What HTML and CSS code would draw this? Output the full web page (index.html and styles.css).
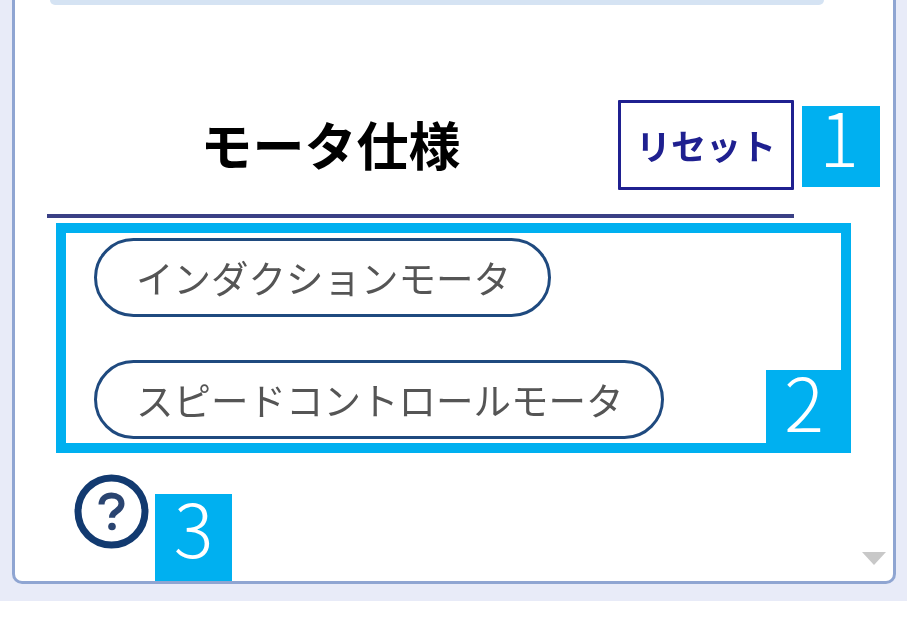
FILE: index.html
```html
<!DOCTYPE html>
<html lang="ja">
<head>
<meta charset="utf-8">
<title>モータ仕様</title>
<link rel="stylesheet" href="styles.css">
</head>
<body>
<div class="stage">
  <section class="panel">
    <div class="top-bar"></div>
    <div class="content">
      <header class="head">
        <h1 class="title">モータ仕様</h1>
        <button class="reset" type="button">リセット</button>
      </header>
      <div class="pills">
        <span class="pill">インダクションモータ</span>
        <span class="pill">スピードコントロールモータ</span>
      </div>
      <svg class="help" viewBox="0 0 75 75" aria-label="ヘルプ">
        <circle cx="37.5" cy="37.5" r="33.500" fill="none" stroke="#123a70" stroke-width="7"/>
        <path d="M27.500 30.500c0-6 4.600-9 10-9s10 3 10 8.300c0 4-2.500 5.800-5 7.500-2.700 1.800-4.500 3-4.500 6.500" fill="none" stroke="#2a4470" stroke-width="6"/>
        <circle cx="38" cy="52.500" r="3.800" fill="#2a4470"/>
      </svg>
    </div>
    <div class="scroll-arrow"></div>
  </section>
  <div class="callout-box"></div>
  <div class="tag tag-1">1</div>
  <div class="tag tag-2">2</div>
  <div class="tag tag-3">3</div>
</div>
</body>
</html>
```
FILE: styles.css
```css
* { box-sizing: border-box; }
html, body { margin: 0; padding: 0; background: #fff; }
body { font-family: "Noto Sans CJK JP", "Noto Sans", sans-serif; }

.stage {
  position: relative;
  height: 601px;
  padding: 0 11px 17px 12px;
  background: #e8ebf8;
}

.panel {
  position: relative;
  height: 584px;
  background: #fff;
  border: 3px solid #8fa5d2;
  border-top: 0;
  border-radius: 0 0 10px 10px;
  filter: blur(0.6px);
}

.top-bar {
  height: 5px;
  margin: 0 69px 0 35px;
  background: #d5e3f3;
  border-radius: 0 0 10px 10px;
}

.content { padding: 95px 99px 0 32px; }

.head {
  display: flex;
  align-items: flex-start;
  padding-bottom: 24px;
  border-bottom: 4px solid #3a4085;
}

.title {
  flex: 1;
  margin: 0;
  height: 90px;
  padding-right: 4px;
  font-size: 52px;
  line-height: 88px;
  font-weight: 700;
  color: #000;
  text-align: center;
}

.reset {
  width: 176px;
  height: 90px;
  padding: 0 0 2px;
  font-family: inherit;
  font-size: 35px;
  font-weight: 700;
  color: #1f2090;
  background: #fff;
  border: 3px solid #1f2090;
  border-radius: 1px;
}

.pills {
  display: flex;
  flex-direction: column;
  align-items: flex-start;
  gap: 43px;
  padding: 20px 0 0 47px;
}

.pill {
  height: 79px;
  padding: 0 37px 0 39px;
  font-size: 37.500px;
  line-height: 71px;
  color: #555;
  border: 3px solid #1f4a7f;
  border-radius: 40px;
  white-space: nowrap;
}

.help {
  display: block;
  width: 75px;
  height: 75px;
  margin: 35px 0 0 27px;
}

.scroll-arrow {
  position: absolute;
  right: 7px;
  bottom: 16px;
  width: 0;
  height: 0;
  border-style: solid;
  border-width: 13px 12.500px 0;
  border-color: #c8c8c8 transparent transparent;
}

.callout-box {
  position: absolute;
  left: 56px;
  top: 223px;
  width: 795px;
  height: 230px;
  border: 10px solid #00b0f0;
}

.tag {
  position: absolute;
  display: flex;
  align-items: center;
  justify-content: center;
  padding-bottom: 24px;
  font-family: "Noto Sans CJK JP", "Noto Sans", sans-serif;
  font-size: 74px;
  font-weight: 200;
  color: #fff;
  background: #00b0f0;
}
.tag-1 { left: 802px; top: 106px; width: 78px; height: 81px; padding-right: 4px; }
.tag-2 { left: 766px; top: 370px; width: 85px; height: 83px; padding-right: 9px; }
.tag-3 { left: 155px; top: 494px; width: 77px; height: 87px; }
```
